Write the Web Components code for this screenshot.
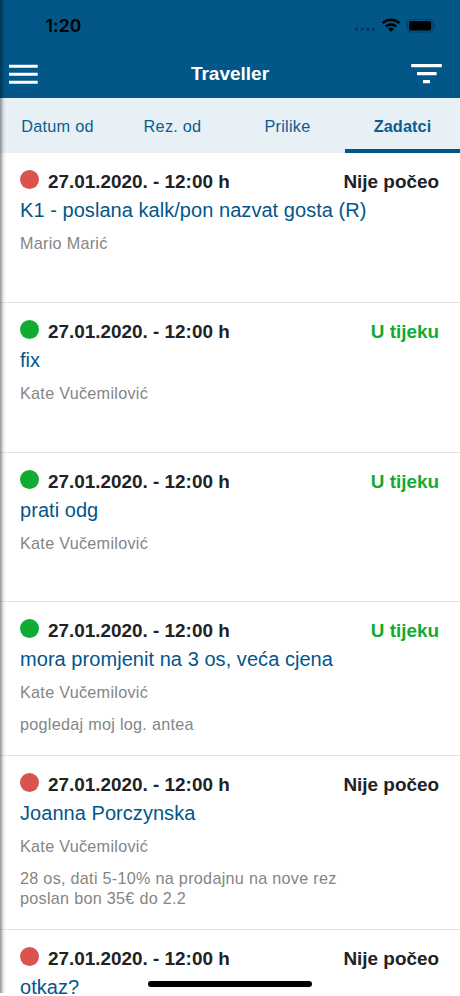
<!DOCTYPE html>
<html lang="hr">
<head>
<meta charset="utf-8">
<title>Traveller</title>
<style>
  body {
    margin: 0;
    height: 996px;
    overflow: hidden;
    background: #fff;
    font-family: "Liberation Sans", Arial, sans-serif;
  }
</style>
</head>
<body>

<traveller-app>
  <status-bar slot="top" time="1:20"></status-bar>
  <nav-bar slot="top">Traveller</nav-bar>
  <tab-bar slot="tabs">
    <tab-item>Datum od</tab-item>
    <tab-item>Rez. od</tab-item>
    <tab-item>Prilike</tab-item>
    <tab-item active>Zadatci</tab-item>
  </tab-bar>

  <task-item state="waiting" date="27.01.2020. - 12:00 h" person="Mario Marić">K1 - poslana kalk/pon nazvat gosta (R)</task-item>
  <task-item state="running" date="27.01.2020. - 12:00 h" person="Kate Vučemilović">fix</task-item>
  <task-item state="running" date="27.01.2020. - 12:00 h" person="Kate Vučemilović">prati odg</task-item>
  <task-item state="running" date="27.01.2020. - 12:00 h" person="Kate Vučemilović">mora promjenit na 3 os, veća cjena
    <span slot="note">pogledaj moj log. antea</span>
  </task-item>
  <task-item state="waiting" date="27.01.2020. - 12:00 h" person="Kate Vučemilović">Joanna Porczynska
    <span slot="note">28 os, dati 5-10% na prodajnu na nove rez<br>poslan bon 35€ do 2.2</span>
  </task-item>
  <task-item state="waiting" date="27.01.2020. - 12:00 h">otkaz?</task-item>
</traveller-app>

<script>
// attaches an open shadow root filled from a template
function render(el, html) {
  const shadow = el.attachShadow({mode: 'open'});
  const template = document.createElement('template');
  template.innerHTML = html;
  shadow.appendChild(template.content.cloneNode(true));
  return shadow;
}

class TravellerApp extends HTMLElement {
  constructor() {
    super();
    render(this, `
    <style>
      :host {
        display: flex;
        flex-direction: column;
        position: relative;
        height: 996px;
        overflow: hidden;
      }
      header {
        flex: none;
        height: 98px;
        background: #025688;
      }
      main {
        flex: 1;
        min-height: 0;
      }
      .edge {
        position: absolute;
        top: 0;
        left: 0;
        width: 6px;
        height: 993px;
        background: linear-gradient(to right, rgba(0,0,0,.42), rgba(0,0,0,.26) 28%, rgba(0,0,0,.09) 55%, rgba(0,0,0,0));
      }
      .home {
        position: absolute;
        left: 148px;
        bottom: 9.4px;
        width: 164px;
        height: 5.6px;
        border-radius: 3px;
        background: #000;
      }
    </style>
    <header><slot name="top"></slot></header>
    <slot name="tabs"></slot>
    <main><slot></slot></main>
    <div class="edge"></div>
    <div class="home"></div>
    `);
  }
}

class StatusBar extends HTMLElement {
  constructor() {
    super();
    const shadow = render(this, `
    <style>
      :host {
        display: flex;
        align-items: center;
        justify-content: space-between;
        height: 50px;
        padding: 0 23px 0 45.5px;
        box-sizing: border-box;
        color: #000;
      }
      .time {
        font: 600 17.5px/20px Inter, sans-serif;
        letter-spacing: .1px;
        padding-top: 1px;
      }
      svg { display: block; }
    </style>
    <span class="time"></span>
    <svg width="82" height="16" viewBox="0 0 82 16">
      <g fill="#013a60">
        <rect x="0" y="10.8" width="3" height="3" rx=".8"/>
        <rect x="5.6" y="10.8" width="3" height="3" rx=".8"/>
        <rect x="11.2" y="10.8" width="3" height="3" rx=".8"/>
        <rect x="16.8" y="10.8" width="3" height="3" rx=".8"/>
      </g>
      <g fill="none" stroke="#000" stroke-width="2.5">
        <path d="M27.6 6.1a12 12 0 0 1 16.8 0"/>
        <path d="M30.9 9.5a7.3 7.3 0 0 1 10.2 0"/>
      </g>
      <path d="M33.2 11.9a4 4 0 0 1 5.6 0L36 14.7z"/>
      <rect x="52.4" y="2.4" width="25.4" height="12.6" rx="3.6" fill="none" stroke="#013f69"/>
      <rect x="54" y="4" width="22.2" height="9.4" rx="2"/>
      <path d="M79.3 6.6q1.7.6 1.7 2.1t-1.7 2.1z" fill="#013f69"/>
    </svg>
    `);
    shadow.querySelector('.time').textContent = this.getAttribute('time');
  }
}

class NavBar extends HTMLElement {
  constructor() {
    super();
    render(this, `
    <style>
      :host {
        display: flex;
        align-items: center;
        justify-content: space-between;
        height: 48px;
        padding: 0 18px 0 9px;
        color: #fff;
      }
      .title {
        font-size: 19px;
        font-weight: bold;
        line-height: 24px;
        padding-left: 10px;
      }
      svg { display: block; fill: currentColor; }
    </style>
    <svg width="30" height="20" viewBox="0 0 30 20">
      <path d="M0 .8h28.7v3H0zM0 8.8h28.7v3H0zM0 16.8h28.7v3H0z"/>
    </svg>
    <span class="title"><slot></slot></span>
    <svg width="31" height="20" viewBox="0 0 31 20">
      <path d="M.2 0h30.6v3.2H.2zM6 8h19.6v3.2H6zM12 16h7v3.2h-7z"/>
    </svg>
    `);
  }
}

class TabBar extends HTMLElement {
  constructor() {
    super();
    render(this, `
    <style>
      :host {
        display: flex;
        flex: none;
        height: 55px;
        background: #e7f0f5;
      }
    </style>
    <slot></slot>
    `);
  }
}

class TabItem extends HTMLElement {
  constructor() {
    super();
    render(this, `
    <style>
      :host {
        display: flex;
        flex: 1;
        align-items: center;
        justify-content: center;
        box-sizing: border-box;
        border-bottom: 4px solid transparent;
        padding-top: 5px;
        font-size: 16.3px;
        letter-spacing: .25px;
        color: #0b5c90;
      }
      :host([active]) {
        border-bottom-color: #025688;
        font-weight: bold;
        letter-spacing: .1px;
      }
    </style>
    <slot></slot>
    `);
  }
}

class TaskItem extends HTMLElement {
  constructor() {
    super();
    const shadow = render(this, `
    <style>
      :host {
        display: flex;
        flex-direction: column;
        box-sizing: border-box;
        min-height: 149.8px;
        padding: 17px 21px 21.4px 20px;
        border-bottom: 1px solid #e2e3e4;
      }
      :host(:last-of-type) {
        min-height: 0;
        padding-bottom: 0;
        border-bottom: none;
      }
      .head {
        display: flex;
        height: 24px;
        font-size: 18.9px;
        font-weight: bold;
        line-height: 24px;
        color: #202226;
      }
      .dot {
        width: 19px;
        height: 19px;
        margin-right: 9px;
        border-radius: 50%;
        background: #d9534f;
      }
      .state { margin-left: auto; }
      :host([state="running"]) .dot { background: #0fab33; }
      :host([state="running"]) .state { color: #0fab33; }
      .title {
        margin-top: 4px;
        font-size: 20px;
        line-height: 24px;
        letter-spacing: .05px;
        color: #02568a;
      }
      :host(:last-of-type) .title {
        height: 21px;
      }
      .person, .note {
        font-size: 16.2px;
        line-height: 20px;
        letter-spacing: .28px;
        color: #858585;
      }
      .person { margin-top: 11px; }
      .note { margin-top: 11.4px; }
    </style>
    <div class="head">
      <span class="dot"></span>
      <span class="date"></span>
      <span class="state"></span>
    </div>
    <div class="title"><slot></slot></div>
    <div class="person"></div>
    <div class="note"><slot name="note"></slot></div>
    `);
    const running = this.getAttribute('state') === 'running';
    shadow.querySelector('.date').textContent = this.getAttribute('date');
    shadow.querySelector('.state').textContent = running ? 'U tijeku' : 'Nije počeo';
    shadow.querySelector('.person').textContent = this.getAttribute('person') || '';
  }
}

customElements.define('traveller-app', TravellerApp);
customElements.define('status-bar', StatusBar);
customElements.define('nav-bar', NavBar);
customElements.define('tab-bar', TabBar);
customElements.define('tab-item', TabItem);
customElements.define('task-item', TaskItem);
</script>
</body>
</html>
